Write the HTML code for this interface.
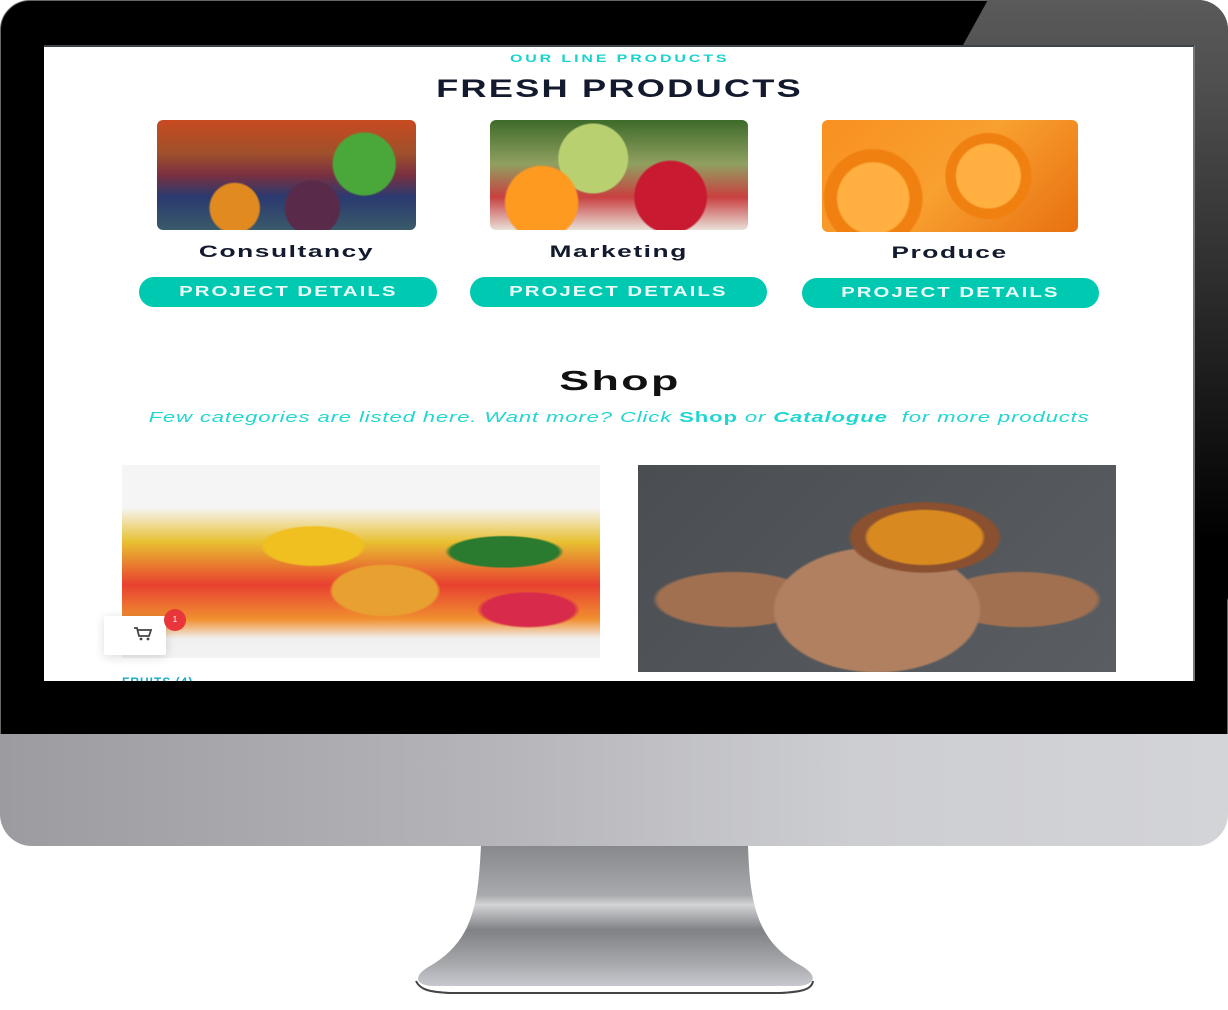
<!DOCTYPE html>
<html><head><meta charset="utf-8"><style>
*{margin:0;padding:0;box-sizing:border-box}
body{width:1228px;height:1010px;background:#fff;position:relative;overflow:hidden;font-family:"Liberation Sans",sans-serif}
.abs{position:absolute}
#bezel{left:0;top:0;width:1228px;height:760px;background:#000;border-radius:30px 30px 0 0;border:1px solid #666;overflow:hidden}
#glare{left:963px;top:0;width:265px;height:600px;background:linear-gradient(180deg,#5a5a5a 0%,#4e4e4e 15%,#2a2a2a 50%,#000 90%);clip-path:polygon(9.4% 0,100% 0,100% 100%,0 7.5%);border-radius:0 30px 0 0}
#chin{left:0;top:734px;width:1228px;height:112px;background:linear-gradient(90deg,#9c9ca0,#b5b5b9 40%,#cdced2 70%,#d3d4d8);border-radius:0 0 32px 32px}
#screen{left:44px;top:45px;width:1151px;height:636px;background:#fff;overflow:hidden;border-top:2px solid #3b4448;border-right:2px solid #777}
.c{position:absolute;left:0;width:1151px;text-align:center}
.c span,.lab span,.btn span{display:inline-block}
.t{font-weight:bold;color:#141a2e}
.btn{position:absolute;height:30px;border-radius:16px;background:#00c9b1;color:#eafffb;font-weight:bold;font-size:15px;letter-spacing:1.5px;text-align:center;line-height:29px}
.btn span{transform:scaleX(1.36)}
.img{position:absolute;border-radius:6px}
.lab span{transform:scaleX(1.55)}
</style></head><body>
<div id="bezel" class="abs"></div>
<div id="glare" class="abs"></div>
<div id="screen" class="abs">
 <div class="c" style="top:6px;font-size:11px;font-weight:bold;color:#18d3cc;letter-spacing:2px"><span style="transform:scaleX(1.45)">OUR LINE PRODUCTS</span></div>
 <div class="c t" style="top:28px;font-size:25px;letter-spacing:1.5px"><span style="transform:scaleX(1.45)">FRESH PRODUCTS</span></div>
 <div class="img" style="left:113px;top:73px;width:259px;height:110px;background:radial-gradient(circle at 30% 80%,#e08a20 0 12%,transparent 13%),radial-gradient(circle at 80% 40%,#4aa83b 0 14%,transparent 15%),radial-gradient(circle at 60% 80%,#5a2a4a 0 15%,transparent 16%),linear-gradient(180deg,#c84a20,#a0502a 30%,#7a3040 50%,#2a3a70 70%,#3a5a6a)"></div>
 <div class="img" style="left:446px;top:73px;width:258px;height:110px;background:radial-gradient(circle at 20% 75%,#ff9a20 0 16%,transparent 17%),radial-gradient(circle at 40% 35%,#b8d070 0 20%,transparent 21%),radial-gradient(circle at 70% 70%,#c81a30 0 18%,transparent 19%),linear-gradient(180deg,#3e6a2a,#90a060 40%,#c84040 70%,#e8e0d8)"></div>
 <div class="img" style="left:778px;top:73px;width:256px;height:112px;background:radial-gradient(circle at 65% 50%,#ffb040 0 18%,#f08010 19% 24%,transparent 25%),radial-gradient(circle at 20% 70%,#ffb040 0 16%,#f08010 17% 22%,transparent 23%),linear-gradient(135deg,#f89020,#f8a030 50%,#e87010)"></div>
 <div class="abs t lab" style="left:113px;top:195px;width:259px;text-align:center;font-size:17px;letter-spacing:1px"><span>Consultancy</span></div>
 <div class="abs t lab" style="left:446px;top:195px;width:258px;text-align:center;font-size:17px;letter-spacing:1px"><span>Marketing</span></div>
 <div class="abs t lab" style="left:778px;top:196px;width:256px;text-align:center;font-size:17px;letter-spacing:1px"><span>Produce</span></div>
 <div class="btn" style="left:95px;top:230px;width:298px"><span>PROJECT DETAILS</span></div>
 <div class="btn" style="left:426px;top:230px;width:297px"><span>PROJECT DETAILS</span></div>
 <div class="btn" style="left:758px;top:231px;width:297px"><span>PROJECT DETAILS</span></div>
 <div class="c t" style="top:318px;font-size:28px;color:#111;letter-spacing:1.5px"><span style="transform:scaleX(1.6)">Shop</span></div>
 <div class="c" style="top:362px;font-size:15px;font-style:italic;color:#22d6d0;letter-spacing:0.6px"><span style="transform:scaleX(1.47)">Few categories are listed here. Want more? Click <b style="font-style:normal">Shop</b> or <b>Catalogue</b>&nbsp; for more products</span></div>
 <div class="abs" style="left:78px;top:418px;width:478px;height:193px;background:radial-gradient(ellipse at 40% 42%,#f0c020 0 12%,transparent 13%),radial-gradient(ellipse at 80% 45%,#2a7a30 0 10%,transparent 11%),radial-gradient(ellipse at 55% 65%,#e8a030 0 14%,transparent 15%),radial-gradient(ellipse at 85% 75%,#d82a4a 0 8%,transparent 9%),linear-gradient(180deg,#f5f5f5 0%,#f5f5f5 22%,#e8c030 40%,#e84030 62%,#f09030 80%,#f0f0f0 90%,#f3f3f3)"></div>
 <div class="abs" style="left:594px;top:418px;width:478px;height:207px;background:radial-gradient(ellipse at 60% 35%,#d88a20 0 14%,#8a5030 15% 18%,transparent 19%),radial-gradient(ellipse at 50% 70%,#b08060 0 30%,transparent 31%),radial-gradient(ellipse at 80% 65%,#a07050 0 14%,transparent 15%),radial-gradient(ellipse at 20% 65%,#a07050 0 14%,transparent 15%),linear-gradient(135deg,#4a4e52,#5a5e62)"></div>
 <div class="abs" style="left:60px;top:569px;width:62px;height:39px;background:#fff;box-shadow:0 2px 10px rgba(0,0,0,.15);border-radius:2px">
  <svg width="62" height="39" viewBox="0 0 62 39"><path d="M30 12h3l2 8h10l2-6H34" fill="none" stroke="#444" stroke-width="1.8"/><circle cx="37" cy="23" r="1.4" fill="#444"/><circle cx="44" cy="23" r="1.4" fill="#444"/></svg>
 </div>
 <div class="abs" style="left:120px;top:562px;width:22px;height:22px;border-radius:50%;background:#e8363a;color:#fff;font-size:8px;text-align:center;line-height:22px">1</div>
 <div class="abs" style="left:78px;top:628px;font-size:12px;font-weight:bold;color:#19a8c8;letter-spacing:1px">FRUITS (4)</div>
</div>
<div id="chin" class="abs"></div>
<svg class="abs" style="left:0;top:846px" width="1228" height="150" viewBox="0 846 1228 150">
 <defs><linearGradient id="st" x1="0" y1="0" x2="0" y2="1"><stop offset="0" stop-color="#88898d"/><stop offset=".35" stop-color="#a8a9ad"/><stop offset=".42" stop-color="#d3d4d6"/><stop offset=".6" stop-color="#808185"/><stop offset=".85" stop-color="#a9aaae"/><stop offset="1" stop-color="#c8c9d0"/></linearGradient></defs>
 <path d="M481 846 L748 846 C750 900 755 940 800 965 C818 975 816 984 800 986 L430 986 C414 984 414 975 430 966 C475 940 478 900 481 846Z" fill="url(#st)"/>
 <path d="M416 981 C420 990 430 992 450 993 L780 993 C800 992 812 990 813 981" fill="none" stroke="#444" stroke-width="2"/>
</svg>
</body></html>
